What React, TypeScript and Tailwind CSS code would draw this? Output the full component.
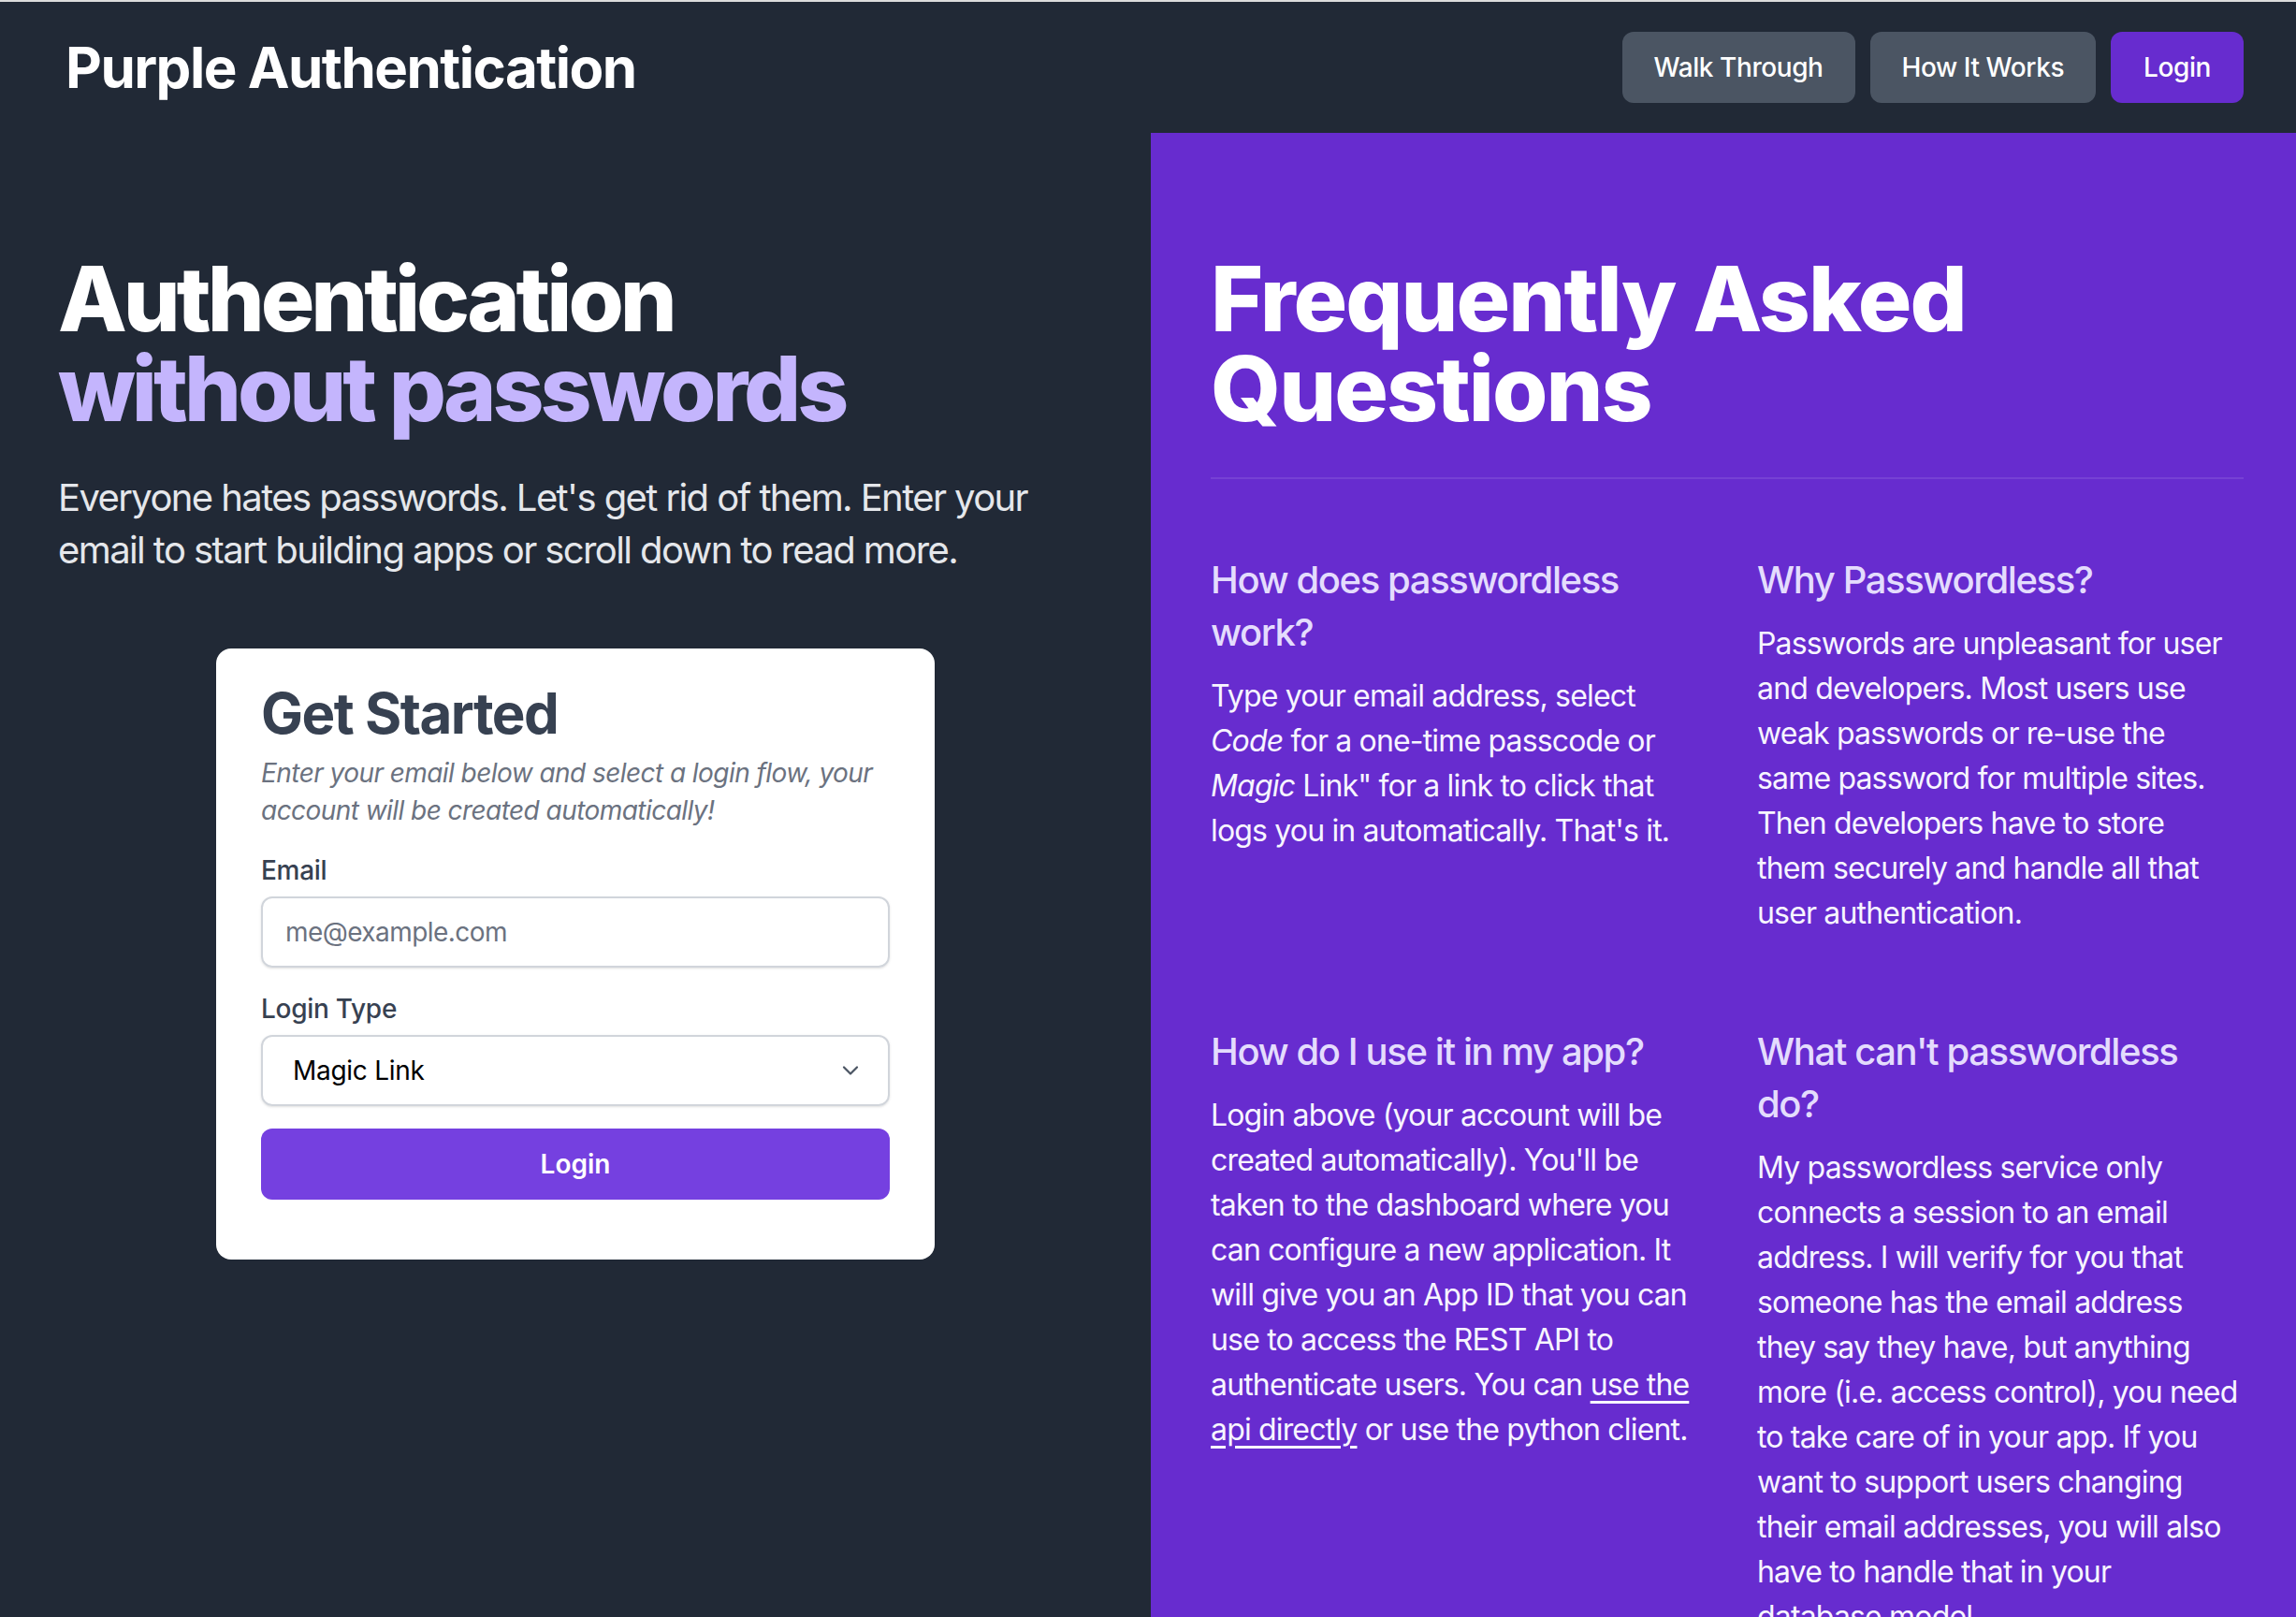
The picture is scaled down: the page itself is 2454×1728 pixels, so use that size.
import React from "react";

function NavButton({ children, primary }: { children: React.ReactNode; primary?: boolean }) {
  return (
    <button
      className={
        primary
          ? "h-[76px] rounded-[12px] bg-[#672ccf] px-[35px] text-[28px] font-medium tracking-[-0.015em] text-white"
          : "h-[76px] rounded-[12px] bg-[#4b5563] px-[34px] text-[28px] font-medium tracking-[-0.015em] text-white"
      }
    >
      {children}
    </button>
  );
}

function Faq({ q, children }: { q: string; children: React.ReactNode }) {
  return (
    <div>
      <h3 className="text-[40px] font-medium leading-[56px] tracking-[-0.035em] text-[#e4dcfd]">{q}</h3>
      <p className="mt-[16px] text-[32px] leading-[48px] tracking-[-0.026em] text-[#f7f5ff]">{children}</p>
    </div>
  );
}

export default function App() {
  return (
    <div className="min-h-screen w-full overflow-hidden bg-[#212936] [font-family:Inter,sans-serif]">
      <div className="h-[2px] bg-[#dcdcdc]" />
      <header className="flex h-[140px] items-center justify-between pl-[70px] pr-[56px]">
        <h1 className="text-[60px] font-bold tracking-[-0.025em] text-white">Purple Authentication</h1>
        <nav className="flex gap-[16px]">
          <NavButton>Walk Through</NavButton>
          <NavButton>How It Works</NavButton>
          <NavButton primary>Login</NavButton>
        </nav>
      </header>
      <main className="flex min-h-[1586px]">
        <section className="w-[1230px] shrink-0 px-[62px] pt-[129px]">
          <h2 className="text-[96px] font-extrabold leading-none tracking-[-0.042em]">
            <span className="block text-white">Authentication</span>
            <span className="block text-[#c4b5fd]">without passwords</span>
          </h2>
          <p className="mt-[41px] text-[40px] leading-[56px] tracking-[-0.04em] text-[#e5e7eb]">
            Everyone hates passwords. Let's get rid of them. Enter your email to start building apps or scroll down
            to read more.
          </p>
          <div className="mx-auto mt-[77px] w-[768px] rounded-[16px] bg-white px-[48px] pb-[64px] pt-[33px]">
            <h2 className="text-[60px] font-bold leading-[72px] tracking-[-0.025em] text-[#374151]">Get Started</h2>
            <p className="mt-[8px] text-[28px] italic leading-[40px] tracking-[-0.02em] text-[#6b7280]">
              Enter your email below and select a login flow, your account will be created automatically!
            </p>
            <label className="mt-[24px] block text-[28px] font-medium leading-[40px] tracking-[-0.01em] text-[#374151]">
              Email
            </label>
            <input
              type="email"
              placeholder="me@example.com"
              className="mt-[8px] block h-[76px] w-full rounded-[12px] border-2 border-[#d1d5db] px-[24px] text-[28px] tracking-[-0.02em] text-[#111827] shadow-sm outline-none placeholder:text-[#6b7280]"
            />
            <label className="mt-[24px] block text-[28px] font-medium leading-[40px] tracking-[-0.01em] text-[#374151]">
              Login Type
            </label>
            <div className="mt-[8px] flex h-[76px] w-full items-center justify-between rounded-[12px] border-2 border-[#d1d5db] pl-[32px] pr-[26px] shadow-sm">
              <span className="text-[28px] tracking-[-0.01em] text-black">Magic Link</span>
              <svg width="28" height="28" viewBox="0 0 20 20" fill="none" stroke="#4b5563" strokeWidth="1.6" strokeLinecap="round" strokeLinejoin="round">
                <path d="M5 7.5l5 5 5-5" />
              </svg>
            </div>
            <button className="mt-[24px] block h-[76px] w-full rounded-[12px] bg-[#7540e0] text-[28px] font-semibold text-white">
              Login
            </button>
          </div>
        </section>
        <section className="flex-1 bg-[#672ccf] pl-[64px] pr-[56px] pt-[129px]">
          <h2 className="text-[96px] font-extrabold leading-none tracking-[-0.02em] text-white">
            Frequently Asked Questions
          </h2>
          <div className="mt-[47px] border-t-2 border-white/10" />
          <div className="mt-[80px] grid grid-cols-2 gap-x-[64px] gap-y-[96px]">
            <Faq q="How does passwordless work?">
              Type your email address, select <em>Code</em> for a one-time passcode or <em>Magic</em> Link" for a link
              to click that logs you in automatically. That's it.
            </Faq>
            <Faq q="Why Passwordless?">
              Passwords are unpleasant for user and developers. Most users use weak passwords or re-use the same
              password for multiple sites. Then developers have to store
              <br />
              them securely and handle all that user authentication.
            </Faq>
            <Faq q="How do I use it in my app?">
              Login above (your account will be created automatically). You'll be taken to the dashboard where you can
              configure a new application. It will give you an App ID that you can use to access the REST API to
              authenticate users. You can{" "}
              <a href="#" className="underline underline-offset-[6px]">
                use the api directly
              </a>{" "}
              or use the python client.
            </Faq>
            <Faq q="What can't passwordless do?">
              My passwordless service only connects a session to an email address. I will verify for you that someone
              has the email address they say they have, but anything more (i.e. access control), you need to take care
              of in your app. If you want to support users changing their email addresses, you will also have to handle
              that in your
              <br />
              database model.
            </Faq>
          </div>
        </section>
      </main>
    </div>
  );
}
